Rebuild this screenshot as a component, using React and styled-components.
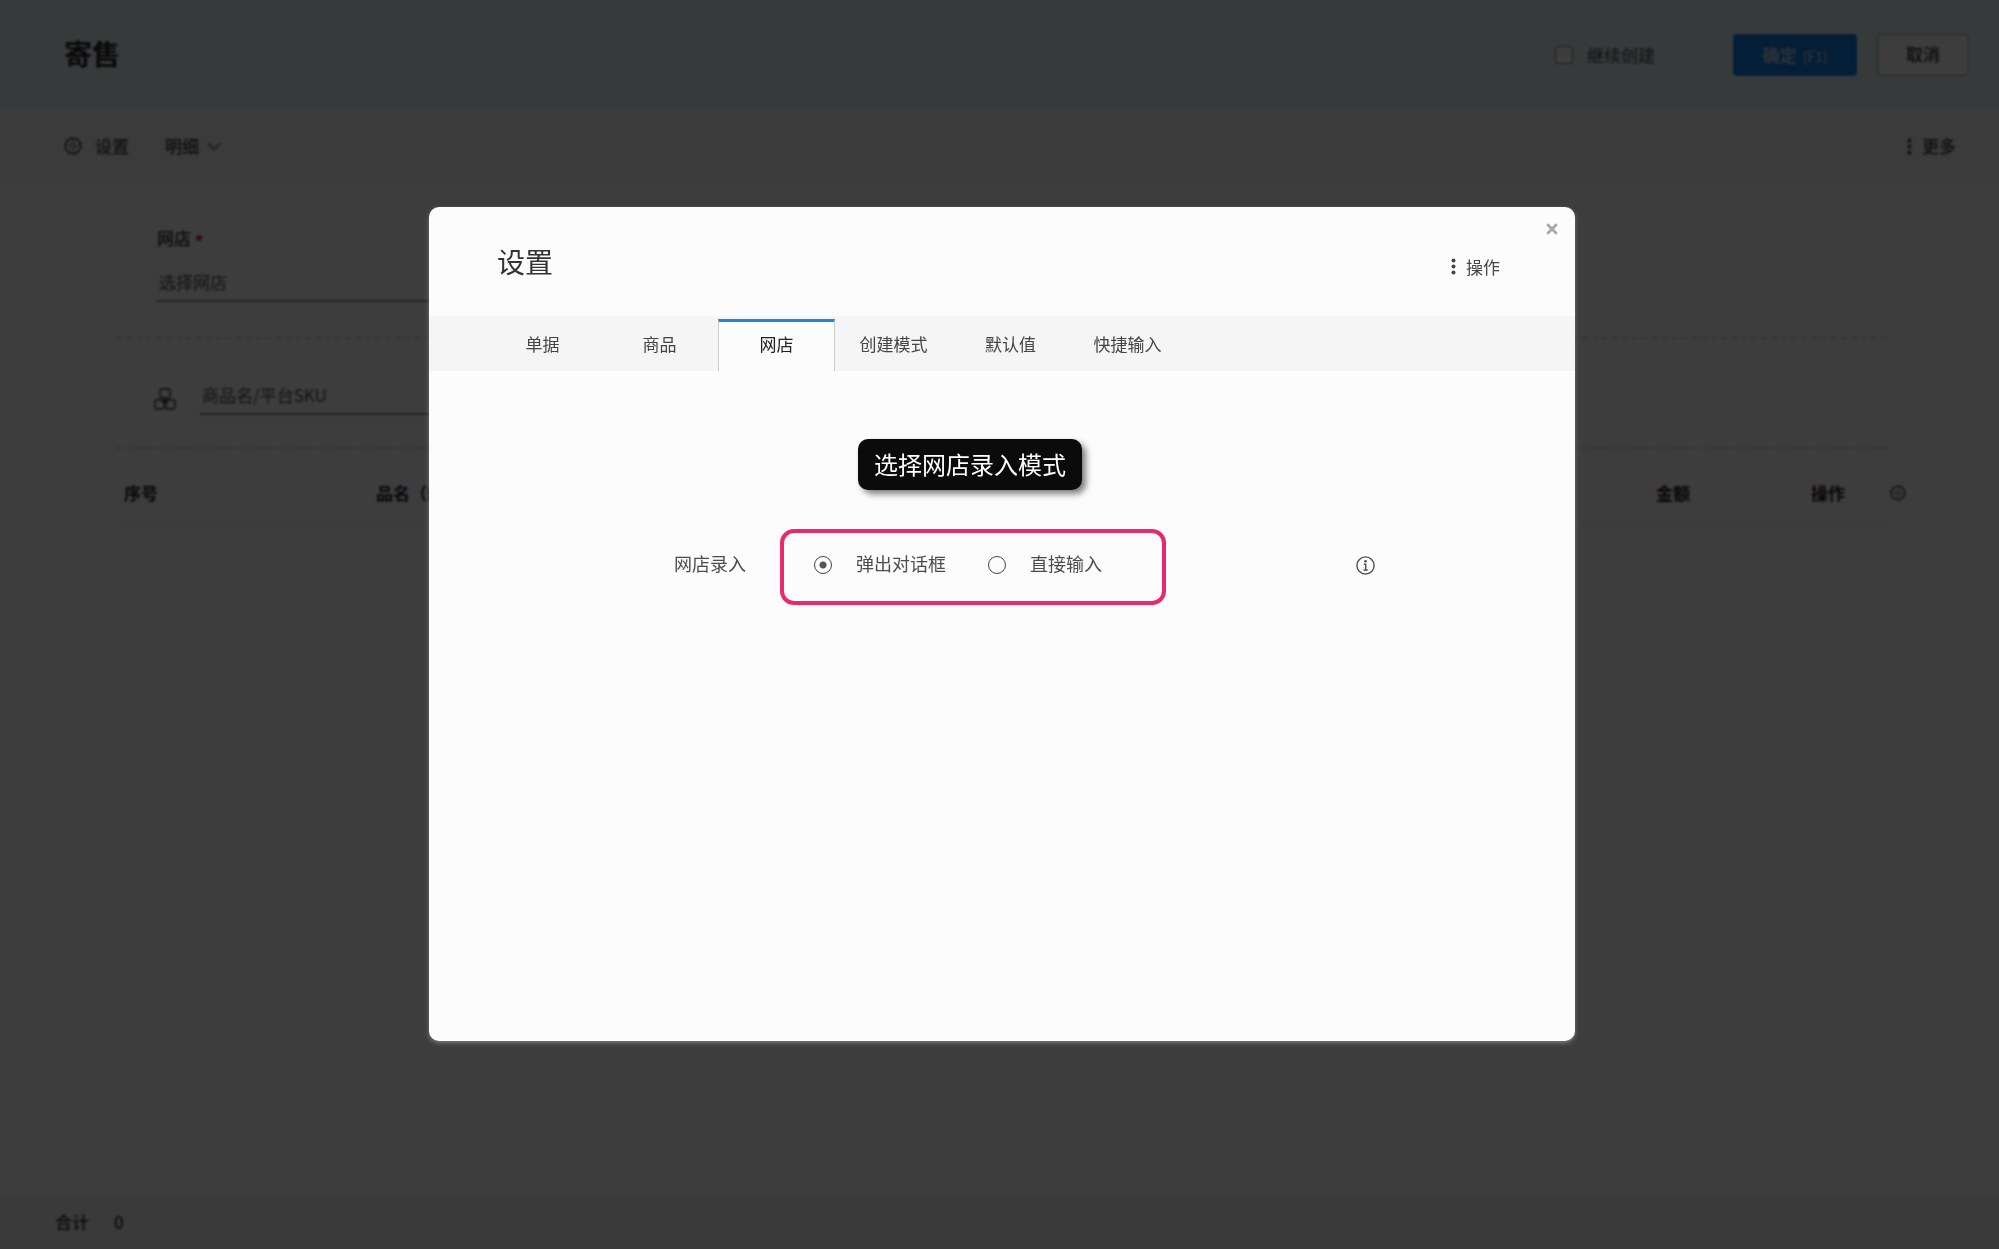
import React, { useState } from "react";
import styled, { createGlobalStyle } from "styled-components";

const tabs = ["单据", "商品", "网店", "创建模式", "默认值", "快捷输入"];
const modos = ["弹出对话框", "直接输入"];

const GearIcon = ({ size }) => (
  <svg width={size} height={size} viewBox="0 0 18 18" fill="none" stroke="currentColor">
    <circle cx="9" cy="9" r="7.4" strokeWidth="1.2" />
    <circle cx="9" cy="9" r="8.3" strokeWidth="1.2" strokeDasharray="2.6 2.6" />
    <circle cx="9" cy="9" r="3.2" strokeWidth="0.6" />
    <path d="M9 2v14M2 9h14" strokeWidth="0.5" />
  </svg>
);

const DotsIcon = () => (
  <svg width="5" height="17" viewBox="0 0 5 17" fill="currentColor">
    <circle cx="2.5" cy="2.5" r="2" />
    <circle cx="2.5" cy="8.5" r="2" />
    <circle cx="2.5" cy="14.5" r="2" />
  </svg>
);

const BoxesIcon = () => (
  <svg width="22" height="22" viewBox="0 0 22 22" fill="none" stroke="currentColor" strokeWidth="1.3">
    <rect x="6" y="1" width="10" height="9" rx="1.5" />
    <rect x="1" y="12" width="9" height="9" rx="1.5" />
    <rect x="12" y="12" width="9" height="9" rx="1.5" />
    <path d="M11 10v4M8 14h6" />
  </svg>
);

const App = () => {
  const [tab, setTab] = useState("网店");
  const [modo, setModo] = useState("弹出对话框");
  const [abierto, setAbierto] = useState(true);

  return (
    <>
      <GlobalStyle />
      <Page>
        <Header>
          <PageTitle>寄售</PageTitle>
          <Continue>
            <Check type="checkbox" />
            继续创建
          </Continue>
          <Confirm type="button">
            确定 <Key>(F1)</Key>
          </Confirm>
          <Cancel type="button">取消</Cancel>
        </Header>
        <Toolbar>
          <ToolButton type="button" $gap="13px" onClick={() => setAbierto(true)}>
            <GearIcon size={18} />
            设置
          </ToolButton>
          <ToolButton type="button" $gap="8px">
            明细
            <svg width="14" height="9" viewBox="0 0 14 9" fill="none" stroke="currentColor" strokeWidth="1.1">
              <path d="M1 1.5l6 6 6-6" />
            </svg>
          </ToolButton>
          <Spacer />
          <ToolButton type="button" $gap="10px">
            <DotsIcon />
            更多
          </ToolButton>
        </Toolbar>
        <Main>
          <ShopSection>
            <Label htmlFor="shop">
              网店
              <Required />
            </Label>
            <Field id="shop" type="text" placeholder="选择网店" />
          </ShopSection>
          <GoodsSection>
            <BoxesIcon />
            <Field type="text" aria-label="商品" placeholder="商品名/平台SKU" />
          </GoodsSection>
          <TableRow>
            <Table>
              <thead>
                <tr>
                  <Th $width="252px">序号</Th>
                  <Th>品名（规格）</Th>
                  <Th $width="155px">金额</Th>
                  <Th $width="84px">操作</Th>
                </tr>
              </thead>
            </Table>
            <IconButton type="button" aria-label="列设置">
              <GearIcon size={16} />
            </IconButton>
          </TableRow>
        </Main>
        <Footer>
          <span>合计</span>
          <span>0</span>
        </Footer>
      </Page>

      {abierto && (
        <Overlay>
          <Dialog role="dialog" aria-modal="true" aria-labelledby="dialog-title">
            <DialogHead>
              <DialogTitle id="dialog-title">设置</DialogTitle>
              <Actions type="button">
                <DotsIcon />
                操作
              </Actions>
              <Close type="button" aria-label="关闭" onClick={() => setAbierto(false)}>
                <svg width="12" height="12" viewBox="0 0 12 12" stroke="currentColor" strokeWidth="2.8" strokeLinecap="round">
                  <path d="M2 2l8 8M10 2l-8 8" />
                </svg>
              </Close>
            </DialogHead>
            <Tabs role="tablist">
              {tabs.map((t) => (
                <Tab key={t} type="button" role="tab" aria-selected={t === tab} $active={t === tab} onClick={() => setTab(t)}>
                  {t}
                </Tab>
              ))}
            </Tabs>
            <Panel role="tabpanel">
              <Tip>选择网店录入模式</Tip>
              <Row>
                <RowLabel id="mode-label">网店录入</RowLabel>
                <Options role="radiogroup" aria-labelledby="mode-label">
                  {modos.map((m) => (
                    <Option key={m}>
                      <Radio type="radio" name="modo" checked={m === modo} onChange={() => setModo(m)} />
                      <OptionText>{m}</OptionText>
                    </Option>
                  ))}
                </Options>
                <Spacer />
                <Info type="button" aria-label="说明">
                  <svg width="19" height="19" viewBox="0 0 19 19" fill="none" stroke="currentColor" strokeWidth="1.4">
                    <circle cx="9.5" cy="9.5" r="8.6" />
                    <circle cx="9.5" cy="5.3" r="1.3" fill="currentColor" stroke="none" />
                    <path d="M7.8 8.3h1.9v5.5M7.5 14h4.2" />
                  </svg>
                </Info>
              </Row>
            </Panel>
          </Dialog>
        </Overlay>
      )}
    </>
  );
};

export default App;

const GlobalStyle = createGlobalStyle`
  * {
    box-sizing: border-box;
  }
  body {
    margin: 0;
    background: #fdfdfd;
    color: #333;
    font-family: "Noto Sans CJK SC", "Noto Sans", sans-serif;
    font-size: 17px;
    line-height: 24px;
  }
  button, input {
    font: inherit;
    color: inherit;
    margin: 0;
  }
  button {
    border: 0;
    padding: 0;
    background: transparent;
    cursor: pointer;
  }
  svg {
    display: block;
    flex: none;
  }
`;
const Page = styled.div`
  min-height: 100vh;
  display: flex;
  flex-direction: column;
`;
const Header = styled.header`
  height: 108px;
  padding: 2px 30px 0 64px;
  display: flex;
  align-items: center;
  background: #e6f3f6;
`;
const PageTitle = styled.h1`
  margin: 0;
  padding-bottom: 4px;
  flex: 1;
  font-size: 28px;
  line-height: 40px;
  color: #222;
`;
const Continue = styled.label`
  display: flex;
  align-items: center;
  gap: 14px;
  margin-right: 78px;
  color: #444;
`;
const Check = styled.input`
  appearance: none;
  width: 18px;
  height: 18px;
  border: 1px solid #777;
  border-radius: 3px;
  background: #fdfdfd;
`;
const Confirm = styled.button`
  width: 124px;
  height: 42px;
  margin-right: 20px;
  border-radius: 4px;
  background: #187ce8;
  color: #ddd;
  font-weight: 500;
`;
const Key = styled.small`
  margin-left: 2px;
  font-size: 14px;
  font-weight: 400;
`;
const Cancel = styled.button`
  width: 92px;
  height: 42px;
  padding-bottom: 2px;
  border: 1px solid #999;
  border-radius: 4px;
  background: #fdfdfd;
  font-weight: 500;
`;
const Toolbar = styled.div`
  height: 74px;
  padding: 2px 43px 0 64px;
  display: flex;
  align-items: center;
  gap: 36px;
  background: #f4f4f4;
`;
const ToolButton = styled.button`
  display: flex;
  align-items: center;
  gap: ${(props) => props.$gap};
  font-weight: 500;
  color: #444;
`;
const Spacer = styled.div`
  flex: 1;
`;
const Main = styled.main`
  flex: 1;
  padding: 0 93px 0 116px;
`;
const ShopSection = styled.section`
  height: 157px;
  margin-right: 19px;
  padding: 44px 41px 0;
  display: flex;
  flex-direction: column;
  border-bottom: 2px dashed #ddd;
`;
const Label = styled.label`
  display: flex;
  align-items: center;
  gap: 5px;
  margin-bottom: 14px;
  font-weight: 500;
`;
const Required = styled.span`
  width: 6px;
  height: 6px;
  border-radius: 50%;
  background: #f03040;
`;
const Field = styled.input`
  width: 100%;
  max-width: 640px;
  height: 38px;
  padding: 0 2px 2px;
  border: 0;
  border-bottom: 2px solid #999;
  background: transparent;
  outline: none;
  &::placeholder {
    color: #555;
    opacity: 1;
  }
`;
const GoodsSection = styled.section`
  height: 110px;
  margin-right: 19px;
  padding: 38px 38px 0;
  display: flex;
  align-items: flex-start;
  gap: 24px;
  border-bottom: 2px dashed #ddd;
  svg {
    margin-top: 11px;
  }
`;
const TableRow = styled.div`
  display: flex;
  align-items: center;
  gap: 3px;
`;
const Table = styled.table`
  flex: 1;
  table-layout: fixed;
  border-collapse: collapse;
`;
const Th = styled.th`
  width: ${(props) => props.$width || "auto"};
  height: 73px;
  padding: 16px 8px 0;
  border-bottom: 1px solid #eee;
  text-align: left;
  vertical-align: middle;
  color: #222;
`;
const IconButton = styled.button`
  padding-top: 14px;
  color: #444;
`;
const Footer = styled.footer`
  height: 54px;
  padding: 0 55px;
  display: flex;
  align-items: center;
  gap: 25px;
  background: #f2f2f2;
  font-weight: 500;
`;
const Overlay = styled.div`
  position: fixed;
  inset: 0;
  display: flex;
  padding: 207px 424px 208px 429px;
  background: rgba(0, 0, 0, 0.76);
  backdrop-filter: blur(1px);
`;
const Dialog = styled.div`
  flex: 1;
  min-width: 0;
  display: flex;
  flex-direction: column;
  overflow: hidden;
  border-radius: 10px;
  background: #fcfcfc;
  box-shadow: 0 2px 4px rgba(255, 255, 255, 0.3);
`;
const DialogHead = styled.div`
  position: relative;
  height: 109px;
  padding: 0 75px 0 68px;
  display: flex;
  align-items: center;
  justify-content: space-between;
`;
const DialogTitle = styled.h2`
  margin: 0;
  padding-bottom: 2px;
  font-size: 28px;
  line-height: 40px;
  font-weight: 400;
`;
const Actions = styled.button`
  display: flex;
  align-items: center;
  gap: 10px;
  padding-top: 10px;
  color: #444;
`;
const Close = styled.button`
  position: absolute;
  top: 16px;
  right: 17px;
  color: #a8a8a8;
`;
const Tabs = styled.div`
  height: 55px;
  padding: 3px 55px 0;
  display: flex;
  background: #f5f5f5;
`;
const Tab = styled.button`
  width: 117px;
  padding-bottom: 6px;
  border: 1px solid transparent;
  border-width: 3px 1px 0;
  color: #444;
  ${(props) =>
    props.$active &&
    `
    border-color: #1e88d2 #ccc transparent;
    background: #fcfcfc;
    color: #222;
  `}
`;
const Panel = styled.div`
  flex: 1;
  padding: 68px 200px 0 245px;
  display: flex;
  flex-direction: column;
`;
const Tip = styled.div`
  align-self: flex-start;
  margin-left: 184px;
  padding: 7px 16px 9px;
  border-radius: 10px;
  background: #0b0b0b;
  box-shadow: 4px 4px 6px rgba(0, 0, 0, 0.5);
  color: #fff;
  font-size: 24px;
  line-height: 35px;
`;
const Row = styled.div`
  margin-top: 39px;
  display: flex;
  align-items: center;
  font-size: 18px;
  color: #4c4c4c;
`;
const RowLabel = styled.span`
  margin-right: 34px;
  padding-bottom: 8px;
`;
const Options = styled.div`
  width: 386px;
  height: 76px;
  padding: 0 30px 4px;
  display: flex;
  align-items: center;
  gap: 42px;
  border: 4px solid #e62a6b;
  border-radius: 14px;
`;
const Option = styled.label`
  display: flex;
  align-items: center;
  gap: 24px;
`;
const OptionText = styled.span`
  padding-bottom: 4px;
`;
const Radio = styled.input`
  appearance: none;
  width: 18px;
  height: 18px;
  border: 1px solid #444;
  border-radius: 50%;
  &:checked {
    background: radial-gradient(circle, #555 0 3px, transparent 4px);
  }
`;
const Info = styled.button`
  padding-bottom: 4px;
`;
